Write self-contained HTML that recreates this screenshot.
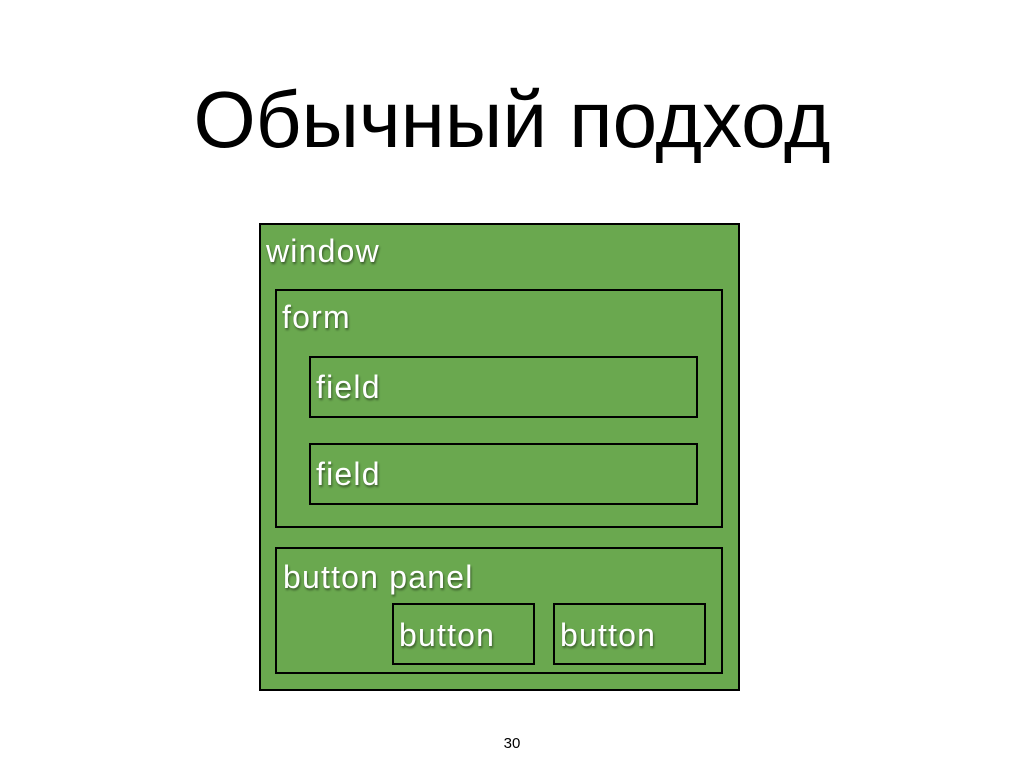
<!DOCTYPE html>
<html><head><meta charset="utf-8"><style>
body{margin:0;width:1024px;height:768px;background:#fff;position:relative;overflow:hidden;font-family:"Liberation Sans",sans-serif}
.t{position:absolute;left:0;width:1024px;top:70px;text-align:center;font-size:80px;line-height:100px;color:#000}
.b{position:absolute;box-sizing:border-box;border:2px solid #000;background:#6aa84f}
.l{position:absolute;color:#fff;font-size:32px;text-shadow:1px 2px 2px rgba(0,0,0,.45);white-space:nowrap;letter-spacing:1.2px}
.n{position:absolute;top:735px;left:0;width:1024px;text-align:center;font-size:15px}
</style></head><body>
<div class="t">Обычный подход</div>
<div class="b" style="left:259px;top:223px;width:481px;height:468px"></div>
<div class="b" style="left:275px;top:289px;width:448px;height:239px"></div>
<div class="b" style="left:309px;top:356px;width:389px;height:62px"></div>
<div class="b" style="left:309px;top:443px;width:389px;height:62px"></div>
<div class="b" style="left:275px;top:547px;width:448px;height:127px"></div>
<div class="b" style="left:392px;top:603px;width:143px;height:62px"></div>
<div class="b" style="left:553px;top:603px;width:153px;height:62px"></div>
<div class="l" style="left:266px;top:233px">window</div>
<div class="l" style="left:282px;top:299px">form</div>
<div class="l" style="left:316px;top:369px">field</div>
<div class="l" style="left:316px;top:456px">field</div>
<div class="l" style="left:283px;top:559px">button panel</div>
<div class="l" style="left:399px;top:617px">button</div>
<div class="l" style="left:560px;top:617px">button</div>
<div class="n">30</div>
</body></html>
